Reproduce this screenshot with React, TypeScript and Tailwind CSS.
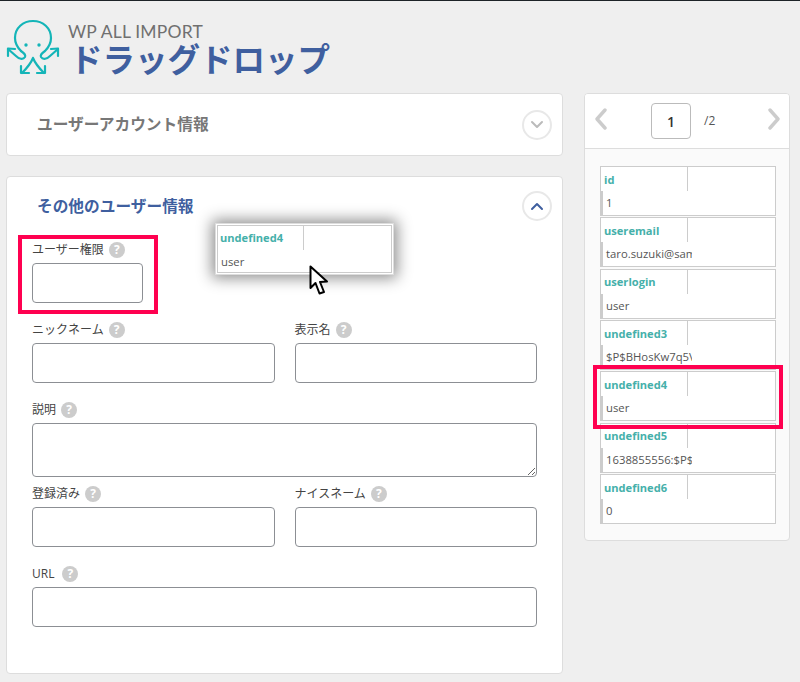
const cjk = "font-['Open_Sans','Noto_Sans_CJK_JP',sans-serif]"

function Help() {
  return (
    <span className="inline-flex h-4 w-4 shrink-0 items-center justify-center rounded-full bg-[#cccccc] text-[12px] font-bold leading-none text-white">
      ?
    </span>
  )
}

function Field({ label, gap = 'gap-[5px]', className = '' }: { label: string; gap?: string; className?: string }) {
  return (
    <div className={className}>
      <div className={`flex h-[15px] items-center text-[12px] text-[#444444] ${gap}`}>
        <span>{label}</span>
        <Help />
      </div>
      <div className="mt-[6px] h-10 rounded border border-[#8c8f94] bg-white" />
    </div>
  )
}

function CircleChevron({ up }: { up?: boolean }) {
  return (
    <div className="flex h-[30px] w-[30px] items-center justify-center rounded-full border-2 border-[#e8e8e8] bg-white">
      <svg width="14" height="9" viewBox="0 0 14 9" fill="none" strokeWidth="2" strokeLinecap="round" strokeLinejoin="round" stroke={up ? '#3f5f9f' : '#bbbbbb'}>
        <path d={up ? 'M2 7 L7 2 L12 7' : 'M2 2 L7 7 L12 2'} />
      </svg>
    </div>
  )
}

function RecordRow({ name, value }: { name: string; value: string }) {
  return (
    <div className="h-[50px] border border-[#cccccc] bg-white">
      <div className="flex h-6 w-[87px] items-center border-r border-[#cccccc] pl-[3px] pt-[2px] text-[11.1px] font-bold text-[#45b0aa]">{name}</div>
      <div className="flex h-6 w-[91px] items-center overflow-hidden whitespace-nowrap border-l-2 border-[#cccccc] pl-[3px] pt-px text-[11.3px] text-[#555555]">
        {value}
      </div>
    </div>
  )
}

const rows = [
  ['id', '1'],
  ['useremail', 'taro.suzuki@sample.com'],
  ['userlogin', 'user'],
  ['undefined3', '$P$BHosKw7q5Vabcdef'],
  ['undefined4', 'user'],
  ['undefined5', '1638855556:$P$BHos'],
  ['undefined6', '0'],
]

export default function App() {
  return (
    <div className={`relative h-[682px] w-[800px] overflow-hidden border-t border-[#1d2327] bg-[#efefef] ${cjk}`}>
      {/* logo */}
      <div className="flex h-[92px] items-start pl-[6px] pt-[18px]">
        <svg width="54" height="56" viewBox="6 19 54 56" fill="none" stroke="#14b5b8" strokeWidth="2.2" strokeLinecap="round" strokeLinejoin="round">
          <path d="M21 51 C17 47 15 43 15 38 C15 28 23 21 33 21 C43 21 51 28 51 38 C51 43 49 47 45 51 C42 53 40 55 41 57 C43 60 47 59 50 56 L58 49" />
          <path d="M51 49 L58 48.5 L58 56" />
          <path d="M21 51 C24 53 26 55 25 57 C23 60 19 59 16 56 L8 49" />
          <path d="M15 49 L8 48.5 L8 56" />
          <path d="M33 58 C31 63 27 68 22 73 M33 58 C35 63 39 68 44 73" />
          <path d="M21 66 L21 73 L29 73 M45 66 L45 73 L37 73" />
          <circle cx="26" cy="45" r="1.7" fill="#14b5b8" stroke="none" />
          <circle cx="39" cy="45" r="1.7" fill="#14b5b8" stroke="none" />
        </svg>
        <div className="ml-[8px] mt-px">
          <div className="font-['Lato',sans-serif] text-[17.5px] leading-[24px] tracking-[0.2px] text-[#707070]">WP ALL IMPORT</div>
          <div className="ml-[2px] text-[32.5px] font-bold leading-[32px] text-[#3f5f9f]">ドラッグドロップ</div>
        </div>
      </div>

      <div className="flex items-start pl-[6px]">
        {/* left column */}
        <div className="w-[557px]">
          <div className="flex h-[63px] items-center justify-between rounded border border-[#dddddd] bg-white pl-[30px] pr-[10px]">
            <span className="pt-px text-[15.7px] font-bold text-[#777777]">ユーザーアカウント情報</span>
            <CircleChevron />
          </div>

          <div className="relative mt-5 h-[498px] rounded border border-[#dddddd] bg-white px-[25px]">
            <div className="flex items-center justify-between pl-[5px] pt-[14px]">
              <span className="pt-px text-[15.7px] font-bold text-[#3f5f9f]">その他のユーザー情報</span>
              <span className="-mr-[15px]"><CircleChevron up /></span>
            </div>

            <Field label="ユーザー権限" className="mt-[21px] w-[111px]" />

            <div className="mt-[19px] grid grid-cols-2 gap-x-5">
              <Field label="ニックネーム" />
              <Field label="表示名" />
            </div>

            <div className="mt-[19px]">
              <div className="flex h-[15px] items-center gap-[5px] text-[12px] text-[#444444]">
                <span>説明</span>
                <Help />
              </div>
              <textarea className="mt-[6px] block h-[54px] w-full rounded border border-[#8c8f94] bg-white" />
            </div>

            <div className="mt-[9px] grid grid-cols-2 gap-x-5">
              <Field label="登録済み" />
              <Field label="ナイスネーム" />
            </div>

            <Field label="URL" gap="gap-2" className="mt-[19px]" />
          </div>
        </div>

        {/* record panel */}
        <div className="ml-[21px] w-[206px] overflow-hidden rounded border border-[#dddddd] bg-[#fafafa]">
          <div className="flex h-[55px] items-center border-b border-[#dddddd] bg-white pl-[9px] pr-2">
            <svg className="mb-[5px]" width="14" height="22" viewBox="0 0 14 22" fill="none" stroke="#cccccc" strokeWidth="3.4" strokeLinecap="round" strokeLinejoin="round">
              <path d="M11 2 L3 11 L11 20" />
            </svg>
            <div className="ml-[43px] flex h-9 w-10 items-center justify-center rounded border border-[#bbbbbb] text-[14px] font-semibold text-[#333333]">1</div>
            <span className="ml-[13px] text-[12px] text-[#555555]">/2</span>
            <svg className="mb-[5px] ml-auto" width="14" height="22" viewBox="0 0 14 22" fill="none" stroke="#cccccc" strokeWidth="3.4" strokeLinecap="round" strokeLinejoin="round">
              <path d="M3 2 L11 11 L3 20" />
            </svg>
          </div>
          <div className="flex flex-col gap-[1.33px] pb-4 pl-[15px] pr-[13px] pt-[17px]">
            {rows.map(([name, value]) => (
              <RecordRow key={name} name={name} value={value} />
            ))}
          </div>
        </div>
      </div>

      {/* annotations */}
      <div className="absolute left-[18px] top-[234px] h-[79px] w-[140px] border-[4px] border-[#ff0050]" />
      <div className="absolute left-[593px] top-[364px] h-[64px] w-[190px] border-[4px] border-[#ff0050]" />

      {/* dragged element */}
      <div className="absolute left-[215px] top-[222px] border border-[#dddddd] bg-white p-px shadow-[0_0_14px_3px_rgba(0,0,0,0.45)]">
        <div className="h-[48px] w-[175px] border border-[#cccccc] bg-white">
          <div className="flex h-6 w-[86px] items-center border-r border-[#cccccc] pl-[2px] pt-px text-[11.1px] font-bold text-[#45b0aa]">undefined4</div>
          <div className="flex h-[22px] items-center pl-[3px] pt-[2px] text-[11.3px] text-[#555555]">user</div>
        </div>
      </div>

      <svg className="absolute left-[309px] top-[264px]" width="20" height="31" viewBox="0 0 20 31">
        <path d="M1.5 1.5 L1.5 23 L6.5 18 L10.5 28.5 L15 27 L11 17 L18 16.5 Z" fill="white" stroke="black" strokeWidth="2" strokeLinejoin="round" />
      </svg>
    </div>
  )
}
